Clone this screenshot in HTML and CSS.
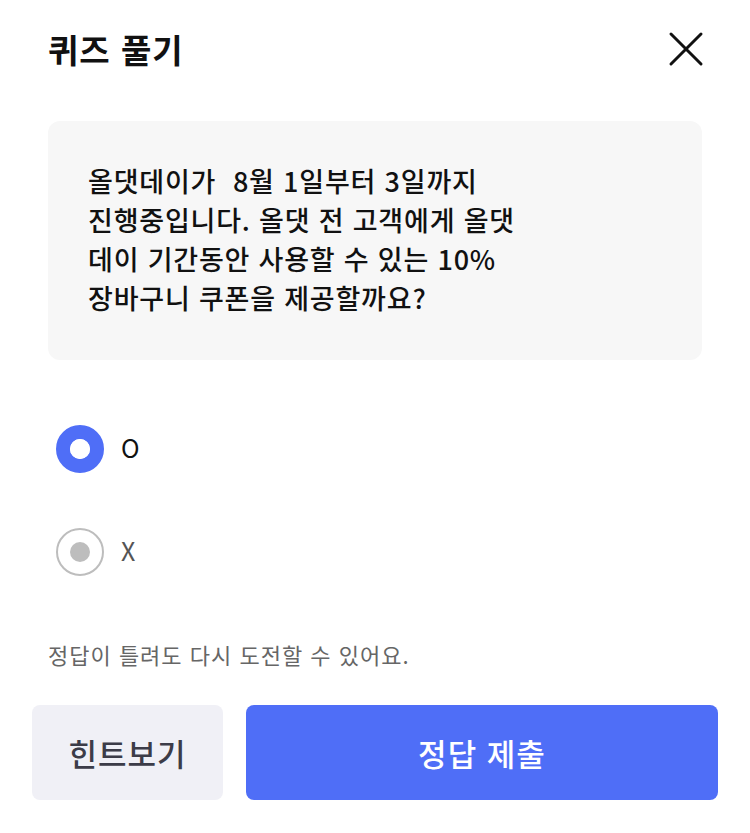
FILE: index.html
```html
<!DOCTYPE html>
<html lang="ko">
  <head>
    <meta charset="UTF-8" />
    <meta name="viewport" content="width=device-width, initial-scale=1.0" />
    <title>퀴즈 풀기</title>
    <link rel="stylesheet" href="styles.css">
  </head>
  <body>
    <div class="quiz" role="dialog" aria-labelledby="quiz-title">
      <div class="quiz-header">
        <h1 id="quiz-title" class="quiz-title">퀴즈 풀기</h1>
        <button class="quiz-close" aria-label="닫기">
          <svg width="36" height="36" viewBox="0 0 36 36" aria-hidden="true">
            <path d="M3 3 L33 33 M33 3 L3 33" stroke="#111" stroke-width="3" stroke-linecap="round" fill="none" />
          </svg>
        </button>
      </div>

      <div class="quiz-question">
        올댓데이가&nbsp; 8월 1일부터 3일까지<br />
        진행중입니다. 올댓 전 고객에게 올댓<br />
        데이 기간동안 사용할 수 있는 10%<br />
        장바구니 쿠폰을 제공할까요?
      </div>

      <div class="quiz-options" role="radiogroup">
        <label class="quiz-option">
          <input type="radio" name="answer" value="O" checked />
          <span class="radio-mark"></span>
          <span class="option-label">O</span>
        </label>
        <label class="quiz-option">
          <input type="radio" name="answer" value="X" />
          <span class="radio-mark"></span>
          <span class="option-label">X</span>
        </label>
      </div>

      <p class="quiz-help">정답이 틀려도 다시 도전할 수 있어요.</p>

      <div class="quiz-actions">
        <button class="btn btn-hint">힌트보기</button>
        <button class="btn btn-submit">정답 제출</button>
      </div>
    </div>
  </body>
</html>
```

FILE: styles.css
```css
body {
  margin: 0;
  background: #fff;
  color: #111;
  font-family: "Noto Sans CJK KR", "Noto Sans", sans-serif;
}

.quiz {
  width: 750px;
  padding: 24px 0 0;
}

.quiz-header {
  display: flex;
  align-items: center;
  justify-content: space-between;
  height: 50px;
  padding: 0 46px 0 48px;
}

.quiz-title {
  margin: 0;
  font-size: 33px;
  font-weight: 700;
  line-height: 1;
  letter-spacing: 1px;
}

.quiz-close {
  display: flex;
  padding: 0;
  border: none;
  background: none;
  cursor: pointer;
}

.quiz-question {
  margin: 47px 48px 0;
  padding: 40px 40px 43px;
  background: #f7f7f7;
  border-radius: 12px;
  font-size: 27px;
  font-weight: 500;
  line-height: 39px;
  letter-spacing: 0.8px;
}

.quiz-options {
  display: flex;
  flex-direction: column;
  gap: 55px;
  margin: 65px 48px 0 56px;
}

.quiz-option {
  display: flex;
  align-items: center;
  gap: 17px;
  height: 48px;
  cursor: pointer;
}

.quiz-option input {
  position: absolute;
  opacity: 0;
}

.radio-mark {
  box-sizing: border-box;
  width: 48px;
  height: 48px;
  border: 2px solid #bdbdbd;
  border-radius: 50%;
  display: flex;
  align-items: center;
  justify-content: center;
}

.radio-mark::after {
  content: "";
  width: 20px;
  height: 20px;
  border-radius: 50%;
  background: #bdbdbd;
}

.quiz-option input:checked + .radio-mark {
  border: 14px solid #4f6ef7;
}

.quiz-option input:checked + .radio-mark::after {
  background: #fff;
}

.option-label {
  font-size: 25px;
  color: #555;
  margin-top: -4px;
}

.quiz-option input:checked ~ .option-label {
  color: #111;
}

.quiz-help {
  margin: 63px 48px 0;
  font-size: 22px;
  line-height: 30px;
  letter-spacing: 1px;
  color: #666;
}

.quiz-actions {
  display: flex;
  gap: 23px;
  margin: 36px 32px 0;
}

.btn {
  height: 95px;
  border: none;
  border-radius: 8px;
  font-family: inherit;
  font-size: 31px;
  font-weight: 500;
  letter-spacing: 1px;
  cursor: pointer;
}

.btn-hint {
  width: 191px;
  background: #f0f0f6;
  color: #3c3c48;
}

.btn-submit {
  flex: 1;
  background: #4f6ef7;
  color: #fff;
}
```
